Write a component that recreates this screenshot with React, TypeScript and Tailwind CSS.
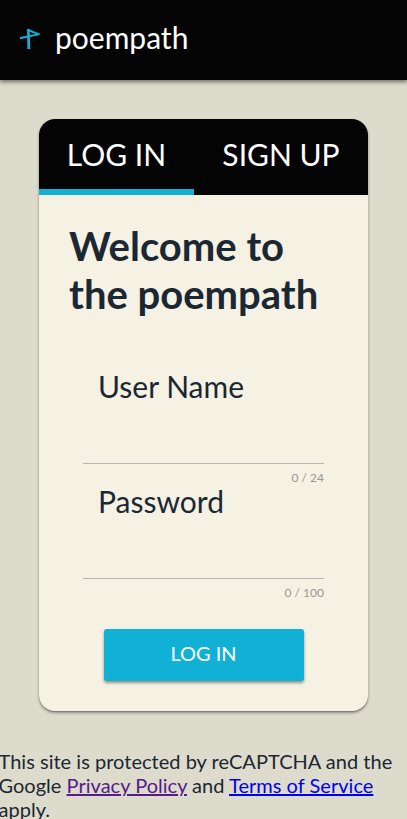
export default function App() {
  return (
    <div className="h-[819px] overflow-hidden bg-[#dddbcb] font-['Lato',sans-serif] text-[#1b2733]">
      <header className="relative flex h-20 items-center bg-[#040404] pl-5 text-white shadow-[0_2px_4px_rgba(0,0,0,0.5)]">
        <svg className="-mt-0.5" width="20" height="22" viewBox="0 0 20 22" fill="#11b1d5">
          <path d="M7 1H9.6L10.3 21H7.4Z" />
          <path d="M0 9L19.5 5.2V7L0 11.2Z" />
          <path d="M7 1H8.5L20 5.7L18.5 7L7.4 3Z" />
        </svg>
        <span className="-mt-[7px] ml-[15px] text-[30px] leading-9">poempath</span>
      </header>
      <main className="mx-[39px] mt-[39px] h-[592px] overflow-hidden rounded-2xl bg-[#f5f1e3] shadow-[0_2px_3px_rgba(0,0,0,0.35),0_1px_1px_rgba(0,0,0,0.2)]">
        <nav className="flex h-[76px] items-start bg-[#040404] text-[30px] text-white">
          <button className="h-[76px] w-[155px] border-b-[6px] border-[#11b1d5] leading-[70px]">LOG IN</button>
          <button className="h-[76px] flex-1 border-b-[6px] border-[#040404] leading-[70px]">SIGN UP</button>
        </nav>
        <h1 className="ml-[30px] mt-[27px] text-[40px] font-bold leading-[48px]">Welcome to<br />the poempath</h1>
        <div className="ml-11 mt-[46px] w-[241px]">
          <label className="block h-[100px] border-b border-[#b9b6b0] pl-[15px] text-[30px] leading-[44px]">User Name</label>
          <p className="h-[15px] pt-[5px] text-right text-xs leading-[18px] text-[#999791]">0 / 24</p>
          <label className="block h-[100px] border-b border-[#b9b6b0] pl-[15px] text-[30px] leading-[44px]">Password</label>
          <p className="h-[15px] pt-[5px] text-right text-xs leading-[18px] text-[#999791]">0 / 100</p>
        </div>
        <button className="ml-[65px] mt-[35px] block h-[52px] w-[200px] rounded-[3px] bg-[#11b1d5] pb-1 pr-px text-xl text-white shadow-[0_2px_3px_rgba(0,0,0,0.4)]">LOG IN</button>
      </main>
      <p className="-ml-[1.5px] mt-[38px] w-[408px] text-xl leading-6 tracking-[0.02px]">This site is protected by reCAPTCHA and the Google <a className="text-[#551a8b] underline decoration-2">Privacy Policy</a> and <a className="text-[#0000ee] underline decoration-2">Terms of Service</a> apply.</p>
    </div>
  );
}
